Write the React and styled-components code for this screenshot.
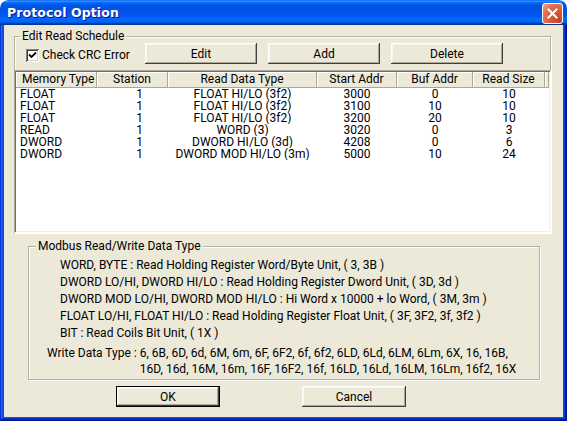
import React from 'react';
import styled, { createGlobalStyle } from 'styled-components';

const UI = `Roboto, "Liberation Sans", Arial, sans-serif`;

const Global = createGlobalStyle`
  html, body { margin: 0; padding: 0; background: #ffffff; }
  body { width: 567px; height: 421px; overflow: hidden; }
  * { box-sizing: border-box; }
`;

const Window = styled.div`
  width: 567px;
  height: 421px;
  display: flex;
  flex-direction: column;
  border-radius: 8px 8px 0 0;
  overflow: hidden;
  font-family: ${UI};
  font-size: 12px;
  color: #000;
`;

const TitleBar = styled.div`
  height: 25px;
  flex: none;
  display: flex;
  align-items: flex-start;
  justify-content: space-between;
  padding: 3px 4px 0 7px;
  background: linear-gradient(
    to bottom,
    #0058ee 0%, #3593ff 4%, #288eff 6%, #127dff 8%, #036ffc 10%,
    #0262ee 14%, #0057e5 20%, #0054e3 24%, #0055eb 56%, #005bf5 66%,
    #026afe 76%, #0062ef 86%, #0052d6 92%, #0040ab 94%, #003092 100%
  );
  border-radius: 8px 8px 0 0;
`;

const Title = styled.span`
  font-family: "DejaVu Sans", Verdana, sans-serif;
  font-weight: bold;
  font-size: 12.5px;
  line-height: 20px;
  color: #fff;
  text-shadow: 1px 1px #0f1089;
  letter-spacing: 0.1px;
`;

const CloseButton = styled.div`
  width: 21px;
  height: 21px;
  border: 1px solid #fff;
  border-radius: 3px;
  background: radial-gradient(circle at 85% 85%, #c8401c 0%, #dc5a34 40%, #e6714f 70%, #f4a68c 100%);
  display: flex;
  align-items: center;
  justify-content: center;
`;

const Frame = styled.div`
  flex: 1;
  display: flex;
  padding: 0 4px 4px 4px;
  background: #0054e3;
  box-shadow: inset -1px -1px #00138c, inset 1px 0 #0831d9, inset -2px -2px #001ea0,
    inset 2px 0 #166aee, inset -3px -3px #003bda, inset 3px 0 #0855dd;
`;

const Client = styled.div`
  flex: 1;
  display: flex;
  flex-direction: column;
  background: #ece9d8;
  padding: 5px 12px 0 10px;
`;

const GroupBox = styled.fieldset`
  margin: 0;
  min-width: 0;
  border: 1px solid #b4b09f;
  box-shadow: inset 1px 1px 0 #fff, 1px 1px 0 #fff;
`;

const ScheduleGroup = styled(GroupBox)`
  padding: 0;
`;

const TypeGroup = styled(GroupBox)`
  margin: 7px 11px 0 14px;
  padding: 5px 0 2px 0;
`;

const Legend = styled.legend`
  margin-left: ${p => p.$offset}px;
  padding: 0 2px;
  line-height: 12px;
  font-size: 12px;
  background: #ece9d8;
`;

const Toolbar = styled.div`
  display: flex;
  align-items: center;
  margin-top: 1px;
  padding-left: 11px;
`;

const CheckLabel = styled.label`
  width: 119px;
  display: flex;
  align-items: center;
  gap: 3px;
  padding-top: 3px;
`;

const CheckBox = styled.span`
  width: 13px;
  height: 13px;
  background: #fff;
  box-shadow: inset 1px 1px #808080, inset -1px -1px #fff, inset 2px 2px #404040, inset -2px -2px #d4d0c8;
  display: flex;
  align-items: center;
  justify-content: center;
`;

const ButtonGroup = styled.div`
  display: flex;
  gap: 11px;
`;

const Button = styled.button`
  width: ${p => p.$w}px;
  height: 21px;
  padding: 0;
  font-family: ${UI};
  font-size: 12px;
  color: #000;
  background: #ece9d8;
  border: ${p => (p.$default ? '1px solid #000' : 'none')};
  box-shadow: inset -1px -1px #404040, inset 1px 1px #fff, inset -2px -2px #aca899, inset 2px 2px #f6f5ee;
`;

const List = styled.div`
  margin: 6px -1px -1px -1px;
  height: 163px;
  padding: 2px;
  background: #fff;
  box-shadow: inset 1px 1px #aca899, inset -1px -1px #fff, inset 2px 2px #716f64, inset -2px -2px #f1efe2;
`;

const COLS = '81px 71px 149px 80px 76px 72px 1fr';

const HeaderRow = styled.div`
  display: grid;
  grid-template-columns: ${COLS};
  height: 16px;
`;

const HeaderCell = styled.div`
  background: #ece9d8;
  border-right: 1px solid #aca899;
  border-bottom: 1px solid #aca899;
  box-shadow: inset 1px 1px #fff;
  line-height: 15px;
  text-align: ${p => (p.$left ? 'left' : 'center')};
  padding-left: ${p => (p.$left ? 6 : 0)}px;
  white-space: nowrap;
  overflow: hidden;
`;

const Row = styled.div`
  display: grid;
  grid-template-columns: ${COLS};
  height: 12px;
  font-size: 12px;
  line-height: 12px;
`;

const Cell = styled.div`
  text-align: ${p => (p.$left ? 'left' : 'center')};
  padding-left: ${p => p.$pad || 0}px;
  white-space: nowrap;
  overflow: hidden;
`;

const DescList = styled.div`
  padding-left: 31px;
  line-height: 17px;
`;

const DescLine = styled.div`
  white-space: nowrap;
`;

const WriteRow = styled.div`
  display: flex;
  margin-top: 3px;
  padding-left: 18px;
  line-height: 16px;
  white-space: nowrap;
`;

const WriteLabel = styled.span`
  flex: none;
  margin-right: 3px;
`;

const WriteCodes = styled.div`
  display: flex;
  flex-direction: column;
`;

const Footer = styled.div`
  display: flex;
  gap: 82px;
  margin-top: 6px;
  padding-left: 102px;
`;

const columns = ['Memory Type', 'Station', 'Read Data Type', 'Start Addr', 'Buf Addr', 'Read Size'];

const rows = [
  ['FLOAT', '1', 'FLOAT HI/LO (3f2)', '3000', '0', '10'],
  ['FLOAT', '1', 'FLOAT HI/LO (3f2)', '3100', '10', '10'],
  ['FLOAT', '1', 'FLOAT HI/LO (3f2)', '3200', '20', '10'],
  ['READ', '1', 'WORD (3)', '3020', '0', '3'],
  ['DWORD', '1', 'DWORD HI/LO (3d)', '4208', '0', '6'],
  ['DWORD', '1', 'DWORD MOD HI/LO (3m)', '5000', '10', '24'],
];

const descriptions = [
  'WORD, BYTE : Read Holding Register Word/Byte Unit, ( 3, 3B )',
  'DWORD LO/HI, DWORD HI/LO : Read Holding Register Dword Unit, ( 3D, 3d )',
  'DWORD MOD LO/HI, DWORD MOD HI/LO : Hi Word x 10000 + lo Word, ( 3M, 3m )',
  'FLOAT LO/HI, FLOAT HI/LO : Read Holding Register Float Unit, ( 3F, 3F2, 3f, 3f2 )',
  'BIT : Read Coils Bit Unit, ( 1X )',
];

export default function App() {
  return (
    <>
      <Global />
      <Window>
        <TitleBar>
          <Title>Protocol Option</Title>
          <CloseButton>
            <svg width="11" height="11" viewBox="0 0 11 11">
              <path d="M1.5 1.5 L9.5 9.5 M9.5 1.5 L1.5 9.5" stroke="#fff" strokeWidth="2" strokeLinecap="square" />
            </svg>
          </CloseButton>
        </TitleBar>
        <Frame>
          <Client>
            <ScheduleGroup>
              <Legend $offset={5}>Edit Read Schedule</Legend>
              <Toolbar>
                <CheckLabel>
                  <CheckBox>
                    <svg width="9" height="9" viewBox="0 0 9 9">
                      <path d="M1 3.5 L3.5 6 L8 1.5" stroke="#000" strokeWidth="1.8" fill="none" />
                    </svg>
                  </CheckBox>
                  Check CRC Error
                </CheckLabel>
                <ButtonGroup>
                  <Button $w={112}>Edit</Button>
                  <Button $w={112}>Add</Button>
                  <Button $w={112}>Delete</Button>
                </ButtonGroup>
              </Toolbar>
              <List>
                <HeaderRow>
                  {columns.map((c, i) => (
                    <HeaderCell key={c} $left={i === 0}>{c}</HeaderCell>
                  ))}
                  <HeaderCell />
                </HeaderRow>
                {rows.map((r, ri) => (
                  <Row key={ri}>
                    {r.map((v, i) => (
                      <Cell key={i} $left={i === 0} $pad={i === 0 ? 4 : i === 1 ? 14 : 0}>{v}</Cell>
                    ))}
                    <Cell />
                  </Row>
                ))}
              </List>
            </ScheduleGroup>
            <TypeGroup>
              <Legend $offset={7}>Modbus Read/Write Data Type</Legend>
              <DescList>
                {descriptions.map(d => (
                  <DescLine key={d}>{d}</DescLine>
                ))}
              </DescList>
              <WriteRow>
                <WriteLabel>Write Data Type :</WriteLabel>
                <WriteCodes>
                  <span>6, 6B, 6D, 6d, 6M, 6m, 6F, 6F2, 6f, 6f2, 6LD, 6Ld, 6LM, 6Lm, 6X, 16, 16B,</span>
                  <span>16D, 16d, 16M, 16m, 16F, 16F2, 16f, 16LD, 16Ld, 16LM, 16Lm, 16f2, 16X</span>
                </WriteCodes>
              </WriteRow>
            </TypeGroup>
            <Footer>
              <Button $w={104} $default>OK</Button>
              <Button $w={104}>Cancel</Button>
            </Footer>
          </Client>
        </Frame>
      </Window>
    </>
  );
}
